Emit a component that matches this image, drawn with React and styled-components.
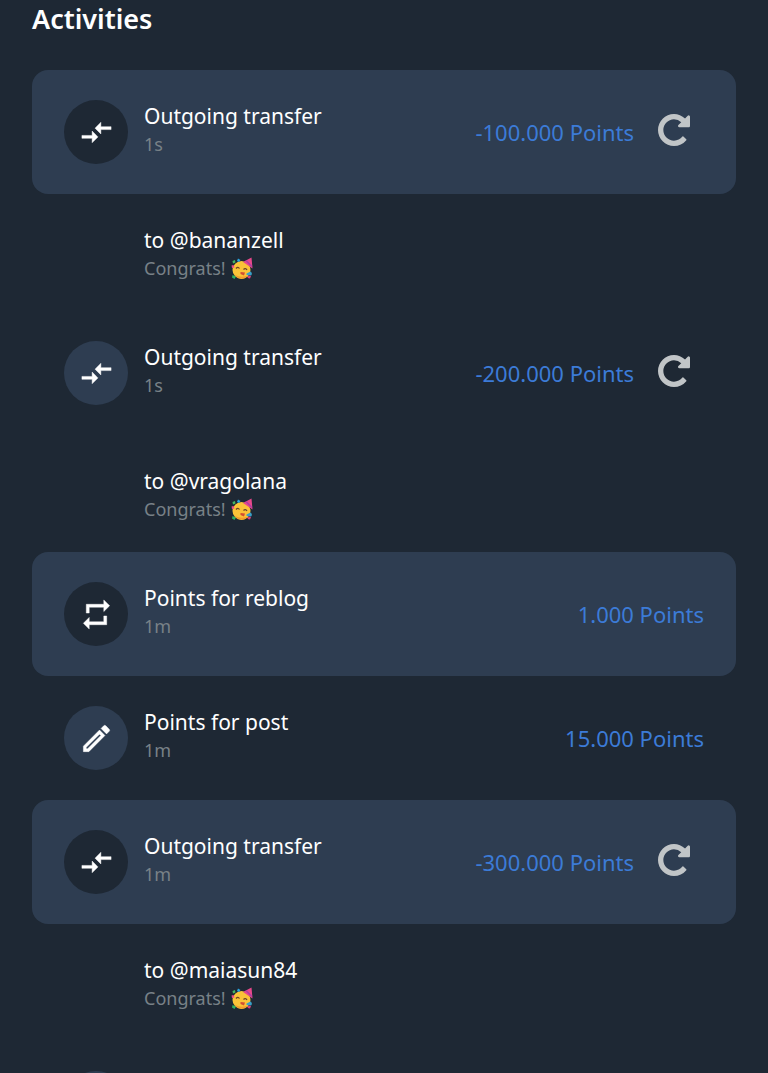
import React from "react";
import styled, { createGlobalStyle } from "styled-components";
import { MdCompareArrows, MdRepeat, MdOutlineModeEdit } from "react-icons/md";

const Global = createGlobalStyle`
  * { box-sizing: border-box; }
  body { margin: 0; background: #1e2834; font-family: "Noto Sans", "Open Sans", sans-serif; }
`;

const Page = styled.main`
  height: 100vh;
  overflow: hidden auto;
  scrollbar-width: none;
  padding: 0 32px;
  color: #fff;
`;

const Title = styled.h1`
  margin: 0 0 32px;
  font-size: 27px;
  line-height: 38px;
  font-weight: 600;
`;

const List = styled.ul`
  list-style: none;
  margin: 0;
  padding: 0;
`;

const Row = styled.div`
  display: flex;
  align-items: center;
  height: 124px;
  padding: 0 32px;
  border-radius: 16px;
  background: ${(p) => (p.$filled ? "#2e3d51" : "transparent")};
`;

const Badge = styled.span`
  display: flex;
  flex: none;
  align-items: center;
  justify-content: center;
  width: 64px;
  height: 64px;
  margin-right: 16px;
  border-radius: 50%;
  background: ${(p) => (p.$dark ? "#1e2834" : "#2e3d51")};

  path:not([fill="none"]) {
    stroke: currentColor;
    stroke-width: 0.3px;
  }
`;

const Texts = styled.div`
  flex: 1;
  min-width: 0;
  padding-bottom: 6px;
`;

const Label = styled.div`
  font-size: 21px;
  line-height: 30px;
`;

const Small = styled.div`
  display: flex;
  align-items: center;
  gap: 5px;
  font-size: 18px;
  line-height: 26px;
  color: #788187;
`;

const Amount = styled.span`
  font-size: 22px;
  line-height: 30px;
  color: #3c7bd7;
  white-space: nowrap;
`;

const Retry = styled.button`
  display: flex;
  margin: 0 14px 4px 24px;
  padding: 0;
  border: 0;
  background: none;
  color: #c1c5c7;
  cursor: pointer;
`;

const Details = styled.div`
  height: 117px;
  padding: 31px 32px 0 112px;
`;

function RetryIcon() {
  return (
    <svg width="32" height="32" viewBox="128 128 1536 1536" fill="currentColor" aria-hidden="true">
      <path d="M1664 256v448q0 26-19 45t-45 19h-448q-42 0-59-40-17-39 14-69l138-138q-148-137-349-137-104 0-198.500 40.500t-163.500 109.500-109.500 163.500-40.500 198.500 40.500 198.500 109.500 163.500 163.500 109.500 198.500 40.500q119 0 225-52t179-147q7-10 23-12 15 0 25 9l137 138q9 8 9.500 20.500t-7.500 22.500q-109 132-264 204.500t-327 72.500q-156 0-298-61t-245-164-164-245-61-298 61-298 164-245 245-164 298-61q147 0 284.500 55.500t244.500 156.500l130-129q29-31 70-14 39 17 39 59z" />
    </svg>
  );
}

function PartyFace() {
  return (
    <svg width="23" height="23" viewBox="0 0 46 46" role="img" aria-label="Partying face">
      <circle cx="21" cy="26" r="18" fill="#fbc338" />
      <path d="M7 36a18 18 0 0 0 28 1q-14 5-28-1Z" fill="#f59b2c" />
      <path d="M24 10 41 1l2 22Z" fill="#e8488b" />
      <path d="m30 7 12 12" stroke="#ad3fa3" strokeWidth="3" />
      <path d="M10 23q4-5 7 0m8 2q4-4 7 1" fill="none" stroke="#6b4528" strokeWidth="2.5" />
      <path d="m19 30 9 1-2 6-7-3Z" fill="#d24d32" />
      <path d="m31 33 8-4q5 4 1 8l-9-1Z" fill="#389fc8" />
      <path d="m3 8 5-2 1 5-5 2Z" fill="#44b664" />
      <path d="m14 3 5 3-3 4-4-2Z" fill="#2aa7e0" />
      <path d="m1 17 4-1 2 5-5 1Z" fill="#ed4e87" />
      <path d="m3 36 7 3-3 5-5-3Z" fill="#32ad61" />
      <path d="m35 37 5 1-2 5-5-1Z" fill="#dc4280" />
    </svg>
  );
}

const icons = { transfer: MdCompareArrows, reblog: MdRepeat, post: MdOutlineModeEdit };

const activities = [
  { kind: "transfer", label: "Outgoing transfer", time: "1s", amount: "-100.000 Points", to: "@bananzell" },
  { kind: "transfer", label: "Outgoing transfer", time: "1s", amount: "-200.000 Points", to: "@vragolana" },
  { kind: "reblog", label: "Points for reblog", time: "1m", amount: "1.000 Points" },
  { kind: "post", label: "Points for post", time: "1m", amount: "15.000 Points" },
  { kind: "transfer", label: "Outgoing transfer", time: "1m", amount: "-300.000 Points", to: "@maiasun84" },
];

function Activity({ item, filled }) {
  const Icon = icons[item.kind];
  return (
    <li>
      <Row $filled={filled}>
        <Badge $dark={filled}><Icon size={35} /></Badge>
        <Texts>
          <Label>{item.label}</Label>
          <Small>{item.time}</Small>
        </Texts>
        <Amount>{item.amount}</Amount>
        {item.to && <Retry type="button" aria-label="Repeat transfer"><RetryIcon /></Retry>}
      </Row>
      {item.to && (
        <Details>
          <Label>to {item.to}</Label>
          <Small>Congrats! <PartyFace /></Small>
        </Details>
      )}
    </li>
  );
}

export default function App() {
  return (
    <>
      <Global />
      <Page>
        <Title>Activities</Title>
        <List>
          {activities.map((item, i) => <Activity key={i} item={item} filled={i % 2 === 0} />)}
          <li><Row><Badge /></Row></li>
        </List>
      </Page>
    </>
  );
}
